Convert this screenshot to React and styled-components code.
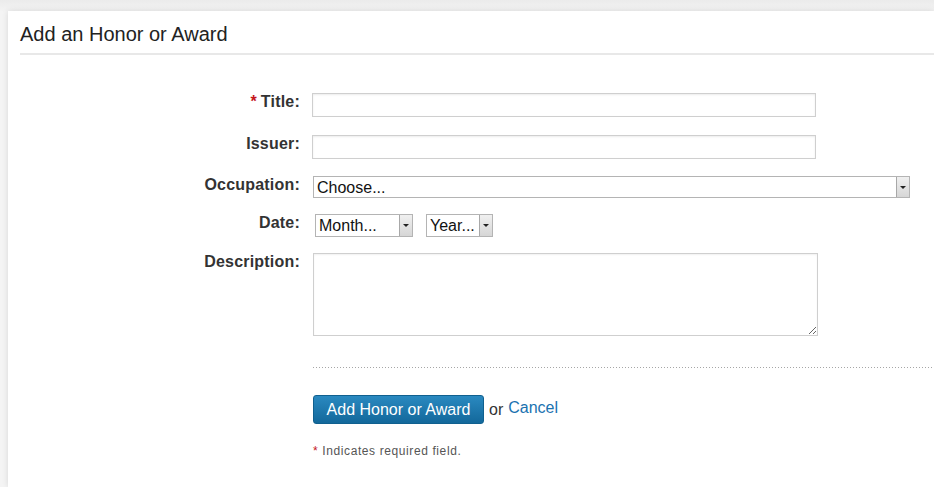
import styled, { createGlobalStyle } from "styled-components";

const GlobalStyle = createGlobalStyle`
  html, body {
    margin: 0;
    padding: 0;
    background: linear-gradient(#ebebeb, #f4f4f4 12px, #f4f4f4);
    font-family: "Liberation Sans", Arial, sans-serif;
    color: #333;
  }
`;

const Page = styled.div`
  width: 934px;
  height: 487px;
  padding: 11px 0 0 8px;
  box-sizing: border-box;
  overflow: hidden;
`;

const Panel = styled.section`
  background: #fff;
  height: 100%;
  box-shadow: 0 0 6px rgba(0, 0, 0, 0.12);
  padding: 0 0 0 12px;
`;

const Heading = styled.h2`
  margin: 0;
  padding: 12px 0 8px;
  font-size: 20px;
  font-weight: normal;
  line-height: 22px;
  color: #222;
  border-bottom: 2px solid #e8e8e8;
`;

const Form = styled.form`
  display: grid;
  grid-template-columns: 280px 1fr;
  column-gap: 12px;
  padding-top: 38px;
`;

const Row = styled.div`
  display: contents;
`;

const Label = styled.label`
  text-align: right;
  font-size: 16px;
  font-weight: bold;
  line-height: 17px;
  padding-top: 0;
  color: #333;
  letter-spacing: 0.2px;
  margin-bottom: ${(p) => p.$gap || 18}px;
`;

const Star = styled.span`
  color: #c4161c;
  font-size: ${(p) => p.$small ? "12px" : "16px"};
  margin-right: 4px;
`;

const Field = styled.div`
  display: flex;
  gap: 13px;
  margin-bottom: ${(p) => p.$gap || 18}px;
  margin-left: ${(p) => p.$shift || 0}px;
`;

const TextInput = styled.input`
  width: 504px;
  height: 24px;
  box-sizing: border-box;
  border: 1px solid #cfcfcf;
  box-shadow: inset 0 1px 2px rgba(0, 0, 0, 0.08);
  padding: 2px 4px;
  font: 16px "Liberation Sans", Arial, sans-serif;
`;

const TextArea = styled.textarea`
  width: 505px;
  height: 83px;
  box-sizing: border-box;
  border: 1px solid #cfcfcf;
  box-shadow: inset 0 1px 2px rgba(0, 0, 0, 0.06);
  font: 16px "Liberation Sans", Arial, sans-serif;
  margin-left: 1px;
`;

const SelectBox = styled.div`
  display: flex;
  width: ${(p) => p.$width}px;
  height: ${(p) => p.$height || 23}px;
  box-sizing: border-box;
  border: 1px solid #b4b4b4;
  background: #fff;
`;

const NativeSelect = styled.select`
  flex: 1;
  min-width: 0;
  appearance: none;
  border: none;
  outline: none;
  background: transparent;
  padding: 0 0 0 3px;
  font: 16px "Liberation Sans", Arial, sans-serif;
  color: #111;
`;

const Arrow = styled.span`
  width: 12px;
  display: flex;
  align-items: center;
  justify-content: center;
  background: linear-gradient(#f0f0f0, #d6d6d6);
  border-left: 1px solid #a8a8a8;
  &::after {
    content: "";
    border-left: 3px solid transparent;
    border-right: 3px solid transparent;
    border-top: 3px solid #222;
  }
`;

const Divider = styled.div`
  grid-column: 2;
  height: 1px;
  background: repeating-linear-gradient(to right, #a6a6a6 0 1px, transparent 1px 3px);
  margin: 13px 0 27px 1px;
`;

const Actions = styled.div`
  grid-column: 2;
  display: flex;
  align-items: center;
  gap: 5px;
  font-size: 16px;
  color: #333;
  margin-left: 1px;
`;

const Button = styled.button`
  width: 171px;
  height: 29px;
  border: 1px solid #10608f;
  border-radius: 3px;
  background: linear-gradient(#2a89c0, #13689b);
  color: #fff;
  font: 16px "Liberation Sans", Arial, sans-serif;
  padding: 0;
`;

const CancelLink = styled.a`
  color: #1a72b0;
  text-decoration: none;
  margin-top: -3px;
`;

const Note = styled.p`
  grid-column: 2;
  margin: 20px 0 0 1px;
  font-size: 12px;
  letter-spacing: 0.6px;
  color: #555;
`;

function Select({ width, height, placeholder }) {
  return (
    <SelectBox $width={width} $height={height}>
      <NativeSelect defaultValue="">
        <option value="">{placeholder}</option>
      </NativeSelect>
      <Arrow />
    </SelectBox>
  );
}

export default function App() {
  return (
    <Page>
      <GlobalStyle />
      <Panel>
        <Heading>Add an Honor or Award</Heading>
        <Form onSubmit={(e) => e.preventDefault()}>
          <Row>
            <Label><Star>*</Star>Title:</Label>
            <Field><TextInput /></Field>
          </Row>
          <Row>
            <Label>Issuer:</Label>
            <Field $gap={17}><TextInput /></Field>
          </Row>
          <Row>
            <Label $gap={16}>Occupation:</Label>
            <Field $gap={16} $shift={1}>
              <Select width={597} height={22} placeholder="Choose..." />
            </Field>
          </Row>
          <Row>
            <Label $gap={16}>Date:</Label>
            <Field $gap={16} $shift={3}>
              <Select width={98} placeholder="Month..." />
              <Select width={67} placeholder="Year..." />
            </Field>
          </Row>
          <Row>
            <Label $gap={0}>Description:</Label>
            <Field $gap={0}><TextArea /></Field>
          </Row>
          <Divider />
          <Actions>
            <Button type="submit">Add Honor or Award</Button>
            or <CancelLink href="#">Cancel</CancelLink>
          </Actions>
          <Note><Star $small>*</Star>Indicates required field.</Note>
        </Form>
      </Panel>
    </Page>
  );
}
